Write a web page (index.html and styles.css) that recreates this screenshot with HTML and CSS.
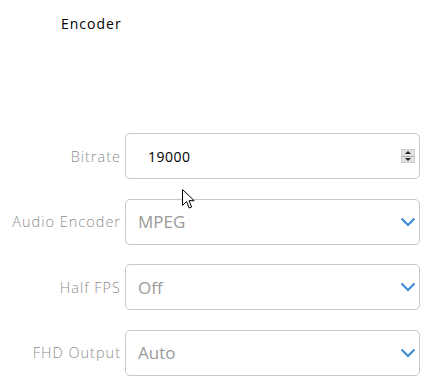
FILE: index.html
```html
<!DOCTYPE html>
<html>
<head>
<meta charset="utf-8">
<link rel="stylesheet" href="styles.css">
</head>
<body>
<div class="page">
  <div class="title">Encoder</div>
  <div class="form">
    <div class="row">
      <label class="label">Bitrate</label>
      <div class="field number">
        <span class="value">19000</span>
        <span class="spin"><span class="up"></span><span class="down"></span></span>
      </div>
    </div>
    <div class="row">
      <label class="label">Audio Encoder</label>
      <div class="field select"><span class="opt">MPEG</span>
        <svg class="chev" width="16" height="10" viewBox="0 0 16 10"><path d="M1.5 1.5 L8 8 L14.5 1.5" fill="none" stroke="#3f8fd8" stroke-width="2.2"/></svg>
      </div>
    </div>
    <div class="row">
      <label class="label">Half FPS</label>
      <div class="field select"><span class="opt">Off</span>
        <svg class="chev" width="16" height="10" viewBox="0 0 16 10"><path d="M1.5 1.5 L8 8 L14.5 1.5" fill="none" stroke="#3f8fd8" stroke-width="2.2"/></svg>
      </div>
    </div>
    <div class="row">
      <label class="label">FHD Output</label>
      <div class="field select"><span class="opt">Auto</span>
        <svg class="chev" width="16" height="10" viewBox="0 0 16 10"><path d="M1.5 1.5 L8 8 L14.5 1.5" fill="none" stroke="#3f8fd8" stroke-width="2.2"/></svg>
      </div>
    </div>
  </div>
  <svg class="cursor" width="13" height="21" viewBox="0 0 13 21"><path d="M0.5 0.5 L0.5 16.5 L4.5 12.5 L7.2 19 L9.6 18 L7 11.7 L12.2 11.7 Z" fill="#fff" stroke="#000" stroke-width="1"/></svg>
</div>
</body>
</html>
```
FILE: styles.css
```css
html, body { margin: 0; padding: 0; background: #fff; }
.page {
  position: relative;
  width: 440px;
  height: 388px;
  font-family: "Open Sans", sans-serif;
}
.title {
  padding: 13px 0 0 61px;
  font-size: 14px;
  line-height: 22px;
  letter-spacing: 1px;
  color: #000;
}
.form {
  margin-top: 98px;
  display: flex;
  flex-direction: column;
  gap: 19.67px;
}
.row {
  display: grid;
  grid-template-columns: 121px 295px;
  column-gap: 4px;
  align-items: center;
  height: 46px;
}
.label {
  text-align: right;
  font-size: 14.5px;
  letter-spacing: 1px;
  font-weight: 300;
  color: #8e8e8e;
}
.field {
  box-sizing: border-box;
  height: 46px;
  border: 1px solid #c8c8c8;
  border-radius: 5px;
  display: flex;
  align-items: center;
  justify-content: space-between;
}
.number { padding: 0 4px 0 22px; }
.value { font-size: 14px; color: #000; letter-spacing: 0.5px; }
.spin {
  display: flex;
  flex-direction: column;
  width: 14px;
  height: 14px;
  background: #e2e2e2;
  border: 1px solid #d0d0d0;
  box-sizing: border-box;
}
.spin .up, .spin .down { flex: 1; position: relative; }
.spin .up { border-bottom: 1px solid #aaa; }
.spin .up::after {
  content: ""; position: absolute; left: 3px; top: 1px;
  border-left: 3px solid transparent; border-right: 3px solid transparent;
  border-bottom: 3px solid #222;
}
.spin .down::after {
  content: ""; position: absolute; left: 3px; top: 1px;
  border-left: 3px solid transparent; border-right: 3px solid transparent;
  border-top: 3px solid #222;
}
.select { padding: 0 3px 0 12px; }
.opt { font-size: 17px; color: #9a9a9a; }
.chev { display: block; }
.cursor { position: absolute; left: 182px; top: 189px; }
```
